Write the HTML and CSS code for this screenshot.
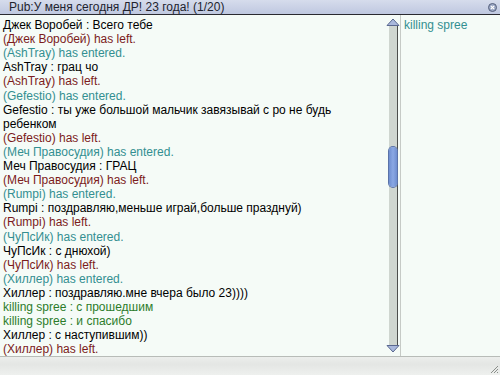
FILE: index.html
```html
<!DOCTYPE html>
<html>
<head>
<meta charset="UTF-8">
<title>Pub</title>
<link rel="stylesheet" href="styles.css">
</head>
<body>
<div class="win">
  <div class="title">
    <span>Pub:У меня сегодня ДР! 23 года! (1/20)</span>
    <svg class="close" width="9" height="9" viewBox="0 0 9 9"><circle cx="4.5" cy="4.5" r="4" fill="#9aa6c4" stroke="#56607c"/><path d="M2.8 2.8l3.4 3.4M6.2 2.8l-3.4 3.4" stroke="#fff" stroke-width="1.2"/></svg>
  </div>
  <div class="main">
    <div class="chat">
      <p>Джек Воробей : Всего тебе</p>
      <p class="left">(Джек Воробей) has left.</p>
      <p class="in">(AshTray) has entered.</p>
      <p>AshTray : грац чо</p>
      <p class="left">(AshTray) has left.</p>
      <p class="in">(Gefestio) has entered.</p>
      <p>Gefestio : ты уже большой мальчик завязывай с ро не будь ребенком</p>
      <p class="left">(Gefestio) has left.</p>
      <p class="in">(Меч Правосудия) has entered.</p>
      <p>Меч Правосудия : ГРАЦ</p>
      <p class="left">(Меч Правосудия) has left.</p>
      <p class="in">(Rumpi) has entered.</p>
      <p>Rumpi : поздравляю,меньше играй,больше празднуй)</p>
      <p class="left">(Rumpi) has left.</p>
      <p class="in">(ЧуПсИк) has entered.</p>
      <p>ЧуПсИк : с днюхой)</p>
      <p class="left">(ЧуПсИк) has left.</p>
      <p class="in">(Хиллер) has entered.</p>
      <p>Хиллер : поздравляю.мне вчера было 23))))</p>
      <p class="me">killing spree : с прошедшим</p>
      <p class="me">killing spree : и спасибо</p>
      <p>Хиллер : с наступившим))</p>
      <p class="left">(Хиллер) has left.</p>
    </div>
    <div class="scroll">
      <svg class="arrow" width="14" height="8" viewBox="0 0 14 8"><path d="M1 7.5L7 1l6 6.5z" fill="#a9b8dc" stroke="#5a6890"/></svg>
      <div class="track"><div class="thumb"></div></div>
      <svg class="arrow" width="14" height="8" viewBox="0 0 14 8"><path d="M1 0.5L7 7l6-6.5z" fill="#a9b8dc" stroke="#5a6890"/></svg>
    </div>
    <div class="users">
      <p>killing spree</p>
    </div>
  </div>
  <div class="foot">
    <svg class="grip" width="10" height="10" viewBox="0 0 10 10"><path d="M9 2L2 9M9 5L5 9M9 8L8 9" stroke="#8a8e8a"/></svg>
  </div>
</div>
</body>
</html>
```

FILE: styles.css
```css
html,body{margin:0;padding:0;overflow:hidden;}
body{font:12px/14.1px "Liberation Sans",Arial,sans-serif;color:#000;background:#f5fbf7;}
p{margin:0;}
.win{width:500px;height:375px;display:flex;flex-direction:column;}
.title{height:15px;display:flex;align-items:center;justify-content:space-between;padding:0 3px 0 9px;background:linear-gradient(#d6dcec,#bfc8e0);border-bottom:1px solid #2a2a30;color:#22232e;}
.close{display:block;}
.main{flex:1;display:flex;background:#f5fbf7;border-bottom:1px solid #b8bcb8;}
.chat{flex:1;padding:3px 0 0 3px;}
.chat .left{color:#7c1c1c;}
.chat .in{color:#338f91;}
.chat .me{color:#2c7c2a;}
.scroll{width:14px;display:flex;flex-direction:column;align-items:center;padding:3px 0 3px;border-right:1px solid #c6cac6;}
.arrow{display:block;}
.track{flex:1;width:8px;background:#cfd6d0;border-right:1px solid #4c4e4c;padding-top:121px;}
.thumb{height:40px;width:8px;background:linear-gradient(90deg,#6e8ed0,#8aa8e4 50%,#6e8ed0);border-radius:4px;box-shadow:0 0 0 1px #5a72a8;}
.users{width:96px;padding:3px 0 0 3px;color:#338f91;}
.foot{height:20px;background:linear-gradient(#eceeec,#e4e6e4 40%,#eef0ee);display:flex;justify-content:flex-end;align-items:flex-end;}
.grip{display:block;margin:0 1px 1px 0;}
```
